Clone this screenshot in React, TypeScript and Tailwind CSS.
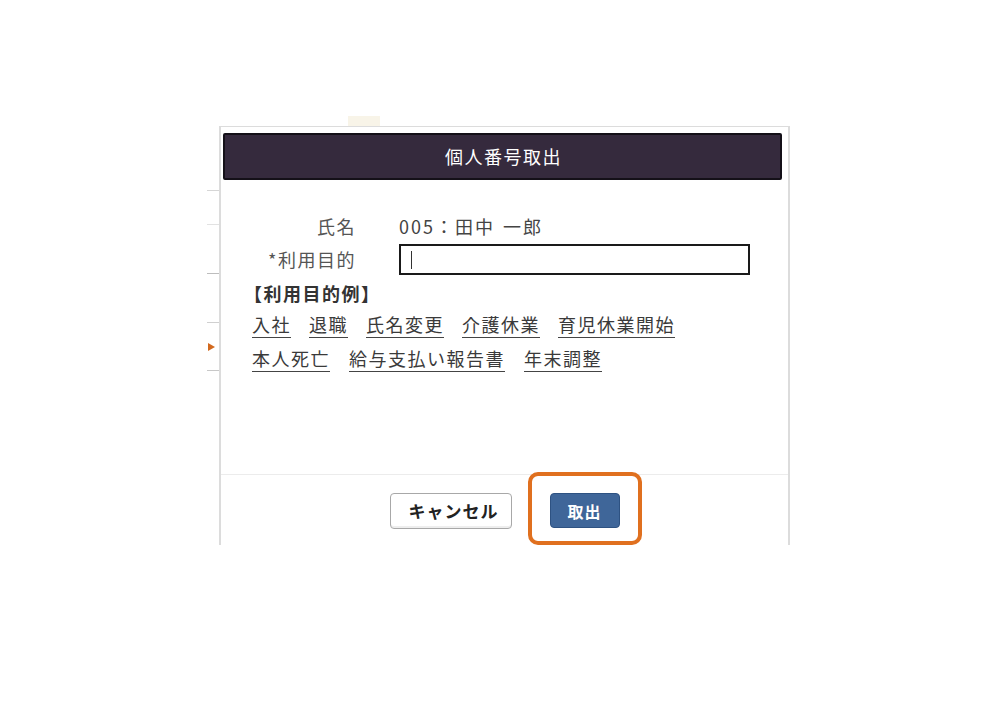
import React from 'react';

const examplesRow1 = ['入社', '退職', '氏名変更', '介護休業', '育児休業開始'];
const examplesRow2 = ['本人死亡', '給与支払い報告書', '年末調整'];

const font = { fontFamily: '"Noto Sans CJK JP", "Noto Sans", sans-serif' };

function ExampleLink({ label }: { label: string }) {
  return (
    <a href="#" className="text-[#3a3a3a] underline decoration-[#444] underline-offset-[5px] hover:text-black">
      {label}
    </a>
  );
}

export default function App() {
  return (
    <div
      className="relative h-[701px] w-[1000px] overflow-hidden bg-white pl-[219px] pt-[126px]"
      style={font}
    >
      {/* page behind the dialog */}
      <div className="absolute left-[348px] top-[116px] h-[11px] w-[32px] bg-[#f8f4e8]" />
      <div className="absolute left-[207px] top-[190px] h-[1px] w-[12px] bg-[#d6d6d6]" />
      <div className="absolute left-[207px] top-[224px] h-[1px] w-[12px] bg-[#e2e2e2]" />
      <div className="absolute left-[207px] top-[273px] h-[1px] w-[12px] bg-[#bdbdbd]" />
      <div className="absolute left-[207px] top-[322px] h-[1px] w-[12px] bg-[#d0d0d0]" />
      <div className="absolute left-[208px] top-[343px] h-0 w-0 border-y-[4px] border-l-[7px] border-y-transparent border-l-[#d2691e]" />
      <div className="absolute left-[207px] top-[370px] h-[1px] w-[12px] bg-[#c8c8c8]" />

      {/* dialog */}
      <div className="relative flex h-[419px] w-[571px] flex-col border-x-2 border-t border-[#dcdcdc] bg-white">
        <div className="ml-[2px] mr-[6px] mt-[6px] flex h-[47px] items-center justify-center rounded-[2px] border-2 border-[#141018] bg-[#352a3d] pl-[2px] text-[18px] tracking-[1.5px] text-white">
          個人番号取出
        </div>

        <div className="flex flex-1 flex-col text-[18px] tracking-[1.5px]">
          <div className="mt-[33px] grid grid-cols-[135px_1fr] items-center gap-x-[43px] gap-y-[4px] text-[#555]">
            <div className="text-right">氏名</div>
            <div className="tracking-[2px] text-[#444]">
              005：田中<span className="ml-[8px]">一郎</span>
            </div>
            <div className="text-right">*利用目的</div>
            <div className="flex h-[31px] w-[351px] items-center border-2 border-[#1a1a1a] bg-white pl-[10px]">
              <span className="h-[18px] w-px bg-[#333]" />
            </div>
          </div>

          <div className="ml-[23px] mt-[5px] font-bold text-[#333]">【利用目的例】</div>

          <div className="ml-[31px] mt-[3px] flex gap-x-[18px] leading-[28px]">
            {examplesRow1.map((label) => (
              <ExampleLink key={label} label={label} />
            ))}
          </div>
          <div className="ml-[31px] mt-[6px] flex gap-x-[19px] leading-[28px]">
            {examplesRow2.map((label) => (
              <ExampleLink key={label} label={label} />
            ))}
          </div>

          <div className="mt-auto flex h-[71px] items-start justify-center gap-x-[38px] border-t border-[#ececec] pt-[18px] tracking-normal">
            <button className="h-[36px] w-[122px] rounded-[4px] border border-[#a8a8a8] bg-white pl-[6px] text-[17px] font-bold tracking-[1px] text-[#222] shadow-[inset_0_-2px_0_#eee]">
              キャンセル
            </button>
            <button className="h-[35px] w-[70px] rounded-[4px] border border-[#2e5282] bg-[#3f6699] text-[16px] font-bold tracking-[1px] text-white">
              取出
            </button>
          </div>
        </div>

        {/* highlight frame */}
        <div className="pointer-events-none absolute left-[307px] top-[345px] h-[73px] w-[114px] rounded-[10px] border-[4px] border-[#e0701f]" />
      </div>
    </div>
  );
}
